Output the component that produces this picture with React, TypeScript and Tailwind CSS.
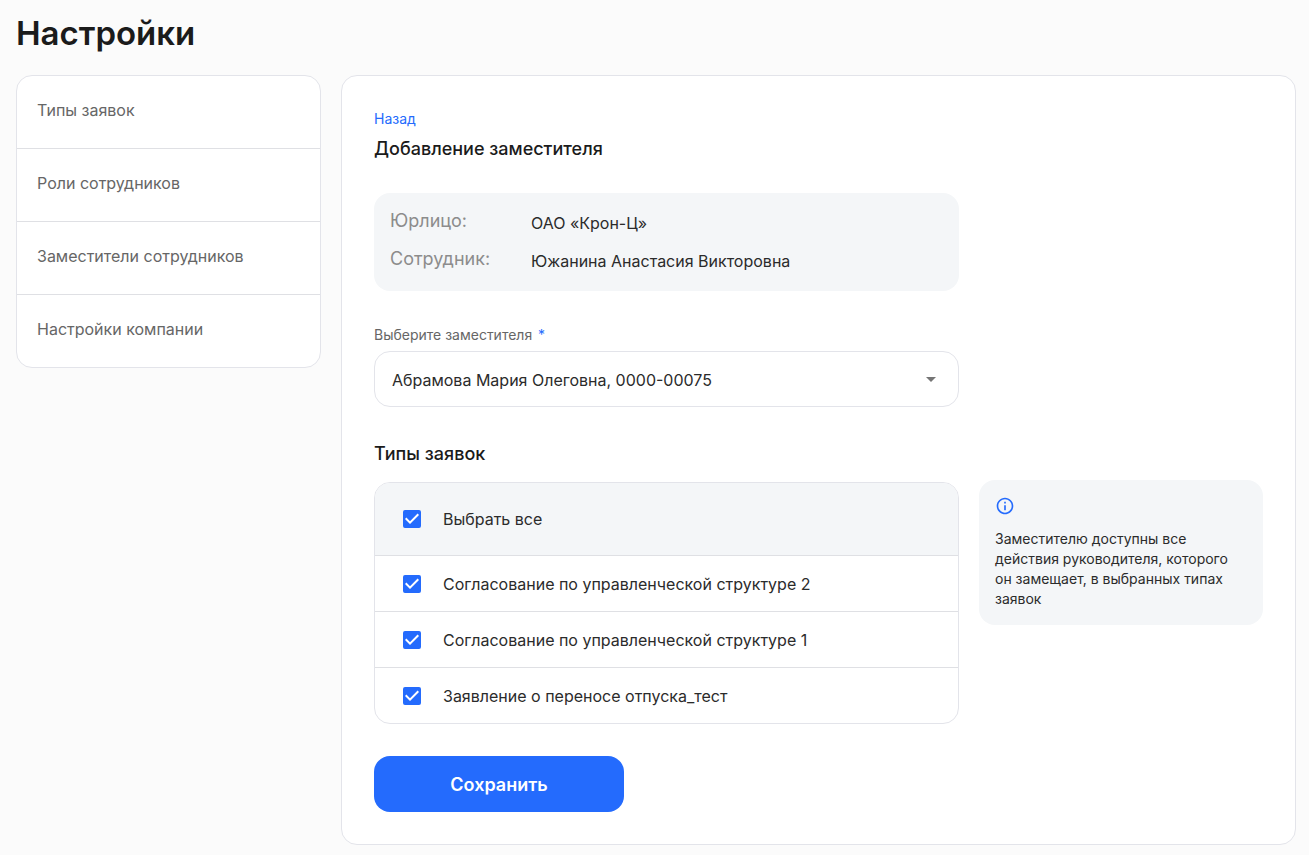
import React, { useState } from "react";
import { MdArrowDropDown, MdInfoOutline } from "react-icons/md";

interface RequestType {
  id: number;
  name: string;
}

interface CheckboxRowProps {
  label: string;
  checked: boolean;
  onChange: () => void;
  className?: string;
}

const menuItems = [
  "Типы заявок",
  "Роли сотрудников",
  "Заместители сотрудников",
  "Настройки компании",
];

const deputies = ["Абрамова Мария Олеговна, 0000-00075"];

const requestTypes: RequestType[] = [
  { id: 1, name: "Согласование по управленческой структуре 2" },
  { id: 2, name: "Согласование по управленческой структуре 1" },
  { id: 3, name: "Заявление о переносе отпуска_тест" },
];

const CheckboxRow = ({ label, checked, onChange, className = "" }: CheckboxRowProps) => (
  <label className={`flex items-center gap-[22px] pl-7 pr-4 cursor-pointer ${className}`}>
    <span className="relative flex shrink-0">
      <input
        type="checkbox"
        checked={checked}
        onChange={onChange}
        className="size-[18px] appearance-none rounded-[2px] border-2 border-[#757575] checked:border-[#246bfd] checked:bg-[#246bfd]"
      />
      {checked && (
        <svg
          viewBox="3 3 18 18"
          className="pointer-events-none absolute inset-0 size-[18px] fill-white"
          aria-hidden="true"
        >
          <path d="M10 17l-5-5 1.41-1.41L10 14.17l7.59-7.59L19 8l-9 9z" />
        </svg>
      )}
    </span>
    {label}
  </label>
);

const App = () => {
  const [deputy, setDeputy] = useState(deputies[0]);
  const [selected, setSelected] = useState<number[]>(requestTypes.map((t) => t.id));

  const allSelected = selected.length === requestTypes.length;

  const toggleAll = () => {
    setSelected(allSelected ? [] : requestTypes.map((t) => t.id));
  };

  const toggleType = (id: number) => {
    setSelected((prev) =>
      prev.includes(id) ? prev.filter((item) => item !== id) : [...prev, id]
    );
  };

  return (
    <div className="min-h-screen bg-[#fbfbfb] pt-[13px] pb-[10px] pl-4 pr-[13px] font-['Inter',sans-serif] text-base font-normal text-[#2b2b2b]">
      <h1 className="mb-[22px] text-[33px] leading-10 font-semibold text-[#1b1b1b]">Настройки</h1>

      <div className="flex items-start gap-5">
        {/* Settings menu */}
        <nav className="w-[305px] shrink-0 divide-y divide-[#dfe0e4] overflow-hidden rounded-2xl border border-[#e3e4ea] bg-white">
          {menuItems.map((item) => (
            <a key={item} href="#" className="block px-5 pt-[22px] pb-[26px] leading-6 text-[#666666]">
              {item}
            </a>
          ))}
        </nav>

        {/* Deputy form */}
        <main className="min-w-0 flex-1 rounded-2xl border border-[#e3e4ea] bg-white p-8">
          <a href="#" className="block w-fit text-sm leading-[22px] text-[#246bfd]">
            Назад
          </a>
          <h2 className="mt-[7px] text-lg leading-6 font-medium text-[#1b1b1b]">Добавление заместителя</h2>

          <dl className="mt-8 grid max-w-[585px] grid-cols-[141px_1fr] gap-y-[10px] rounded-2xl bg-[#f4f6f8] p-4">
            <dt className="text-lg leading-6 text-[#8c8c8c]">Юрлицо:</dt>
            <dd className="leading-7">ОАО «Крон-Ц»</dd>
            <dt className="text-lg leading-6 text-[#8c8c8c]">Сотрудник:</dt>
            <dd className="leading-7">Южанина Анастасия Викторовна</dd>
          </dl>

          <label htmlFor="deputy" className="mt-[34px] block text-sm leading-5 text-[#666666]">
            Выберите заместителя <span className="ml-[2px] text-[#246bfd]">*</span>
          </label>
          <div className="relative mt-[6px] max-w-[585px]">
            <select
              id="deputy"
              value={deputy}
              onChange={(e) => setDeputy(e.target.value)}
              className="h-14 w-full appearance-none rounded-2xl border border-[#e3e4ea] bg-white pt-[2px] pl-[17px] pr-12"
            >
              {deputies.map((d) => (
                <option key={d} value={d}>
                  {d}
                </option>
              ))}
            </select>
            <MdArrowDropDown
              size={24}
              className="pointer-events-none absolute right-4 top-4 text-[#757575]"
            />
          </div>

          <h2 className="mt-[33px] text-lg leading-7 font-medium text-[#1b1b1b]">Типы заявок</h2>

          <div className="mt-3 flex items-start gap-5">
            <div className="mt-[2px] w-[585px] divide-y divide-[#dfe0e4] overflow-hidden rounded-2xl border border-[#e3e4ea]">
              <CheckboxRow
                label="Выбрать все"
                checked={allSelected}
                onChange={toggleAll}
                className="h-[73px] bg-[#f4f6f8]"
              />
              {requestTypes.map((type) => (
                <CheckboxRow
                  key={type.id}
                  label={type.name}
                  checked={selected.includes(type.id)}
                  onChange={() => toggleType(type.id)}
                  className="h-14 last:h-[55px]"
                />
              ))}
            </div>

            <aside className="min-w-0 flex-1 rounded-2xl bg-[#f4f6f8] p-4">
              <MdInfoOutline size={20} className="text-[#246bfd]" />
              <p className="mt-[13px] text-sm leading-5">
                Заместителю доступны все действия руководителя, которого он замещает, в выбранных
                типах заявок
              </p>
            </aside>
          </div>

          <button
            type="button"
            className="mt-8 h-14 w-[250px] rounded-2xl bg-[#246bfd] pt-[2px] text-lg font-semibold text-white"
          >
            Сохранить
          </button>
        </main>
      </div>
    </div>
  );
};

export default App;
